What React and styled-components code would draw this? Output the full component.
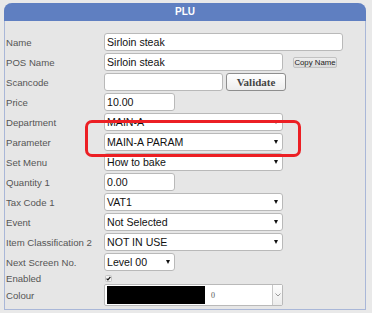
import React from 'react'
import styled, { createGlobalStyle } from 'styled-components'

const GlobalStyle = createGlobalStyle`
  html, body {
    margin: 0;
    padding: 0;
    background: #e9e9e9;
  }
  body {
    font-family: "Liberation Sans", Arial, sans-serif;
  }
`

const fields = [
  { label: 'Name', kind: 'input', value: 'Sirloin steak', width: 239 },
  { label: 'POS Name', kind: 'input', value: 'Sirloin steak', width: 179, extra: 'copy' },
  { label: 'Scancode', kind: 'input', value: '', width: 119, extra: 'validate' },
  { label: 'Price', kind: 'input', value: '10.00', width: 71 },
  { label: 'Department', kind: 'select', value: 'MAIN-A', width: 179 },
  { label: 'Parameter', kind: 'select', value: 'MAIN-A PARAM', width: 179 },
  { label: 'Set Menu', kind: 'select', value: 'How to bake', width: 179 },
  { label: 'Quantity 1', kind: 'input', value: '0.00', width: 71 },
  { label: 'Tax Code 1', kind: 'select', value: 'VAT1', width: 179 },
  { label: 'Event', kind: 'select', value: 'Not Selected', width: 179 },
  { label: 'Item Classification 2', kind: 'select', value: 'NOT IN USE', width: 179 },
  { label: 'Next Screen No.', kind: 'select', value: 'Level 00', width: 71 },
]

const App = () => (
  <>
    <GlobalStyle />
    <Panel>
      <Header>PLU</Header>
      <Body>
        {fields.map(f => (
          <Row key={f.label}>
            <Label>{f.label}</Label>
            <Controls>
              {f.kind === 'input' ? (
                <TextBox $width={f.width}>{f.value}</TextBox>
              ) : (
                <SelectBox $width={f.width}>
                  <span>{f.value}</span>
                  <Arrow />
                </SelectBox>
              )}
              {f.extra === 'copy' && <CopyButton>Copy Name</CopyButton>}
              {f.extra === 'validate' && <ValidateButton>Validate</ValidateButton>}
            </Controls>
          </Row>
        ))}
        <Row $height={9}>
          <Label>Enabled</Label>
          <Controls>
            <Check viewBox="0 0 7 7">
              <rect x="0.5" y="0.5" width="6" height="6" rx="1" fill="#f2f2f2" stroke="#c4c4c4" />
              <path d="M1.6 3.6 L2.9 4.9 L5.4 1.9" fill="none" stroke="#111" strokeWidth="1.2" />
            </Check>
          </Controls>
        </Row>
        <Row $height={22}>
          <Label>Colour</Label>
          <Controls>
            <ColourPicker>
              <Swatch />
              <ColourValue>0</ColourValue>
              <PickerToggle>
                <svg width="6" height="4" viewBox="0 0 6 4">
                  <path d="M0.5 0.5 L3 3 L5.5 0.5" fill="none" stroke="#999" strokeWidth="1" />
                </svg>
              </PickerToggle>
            </ColourPicker>
          </Controls>
        </Row>
      </Body>
      <Highlight />
    </Panel>
  </>
)

export default App

// #region styled-components
const Panel = styled.div`
  position: relative;
  margin: 3px 0 0 4px;
  width: 362px;
  box-sizing: border-box;
  border: 1px solid #a9b7d8;
  border-top: none;
  border-radius: 8px 8px 0 0;
  background: #e6e6e6;
`

const Header = styled.div`
  height: 18px;
  margin: 0 -1px;
  border-radius: 8px 8px 0 0;
  background: #5f7fc1;
  color: #fff;
  font-size: 10px;
  font-weight: 700;
  line-height: 18px;
  text-align: center;
`

const Body = styled.div`
  display: flex;
  flex-direction: column;
  gap: 2px;
  padding: 12px 0 3px;
`

const Row = styled.div`
  display: grid;
  grid-template-columns: 99px 1fr;
  align-items: center;
  height: ${p => p.$height || 18}px;
`

const Label = styled.div`
  padding-left: 1px;
  color: #555;
  font-size: 9.6px;
  white-space: nowrap;
`

const Controls = styled.div`
  display: flex;
  align-items: center;
  height: 100%;
`

const TextBox = styled.div`
  box-sizing: border-box;
  width: ${p => p.$width}px;
  height: 18px;
  padding: 0 2px;
  border: 1px solid #b9b9b9;
  border-radius: 3px;
  background: #fff;
  color: #111;
  font-size: 10.6px;
  line-height: 16px;
  white-space: nowrap;
`

const SelectBox = styled(TextBox)`
  display: flex;
  align-items: center;
  justify-content: space-between;
  padding-right: 4px;
`

const Arrow = styled.span`
  width: 0;
  height: 0;
  border-left: 2.5px solid transparent;
  border-right: 2.5px solid transparent;
  border-top: 4px solid #111;
`

const CopyButton = styled.div`
  margin-left: 10px;
  box-sizing: border-box;
  width: 44px;
  height: 11px;
  border: 1px solid #c2c2c2;
  border-radius: 2px;
  background: linear-gradient(#eeeeee, #d9d9d9);
  color: #222;
  font-size: 7.8px;
  line-height: 9px;
  text-align: center;
  white-space: nowrap;
`

const ValidateButton = styled.div`
  margin-left: 3px;
  box-sizing: border-box;
  width: 60px;
  height: 18px;
  border: 1px solid #8e8e8e;
  border-radius: 3px;
  background: linear-gradient(#ffffff, #ededed);
  color: #444;
  font-family: "Liberation Serif", "Times New Roman", serif;
  font-size: 11px;
  font-weight: 700;
  line-height: 16px;
  text-align: center;
`

const Check = styled.svg`
  width: 7px;
  height: 7px;
  margin-left: 1px;
`

const ColourPicker = styled.div`
  display: flex;
  align-items: stretch;
  box-sizing: border-box;
  width: 179px;
  height: 22px;
  padding: 1px 0 1px 2px;
  border: 1px solid #b9b9b9;
  border-radius: 2px;
  background: #fff;
`

const Swatch = styled.div`
  width: 98px;
  background: #000;
`

const ColourValue = styled.div`
  flex: 1;
  padding-left: 6px;
  color: #555;
  font-family: "Liberation Serif", "Times New Roman", serif;
  font-size: 8px;
  line-height: 20px;
`

const PickerToggle = styled.div`
  display: flex;
  align-items: center;
  justify-content: center;
  width: 9px;
  margin: -1px 0;
  border-left: 1px solid #c8c8c8;
  background: linear-gradient(#fdfdfd, #ececec);
`

const Highlight = styled.div`
  position: absolute;
  left: 80px;
  top: 117px;
  width: 216px;
  height: 37px;
  box-sizing: border-box;
  border: 3px solid #ec1f24;
  border-radius: 7px;
  pointer-events: none;
`
// #endregion
